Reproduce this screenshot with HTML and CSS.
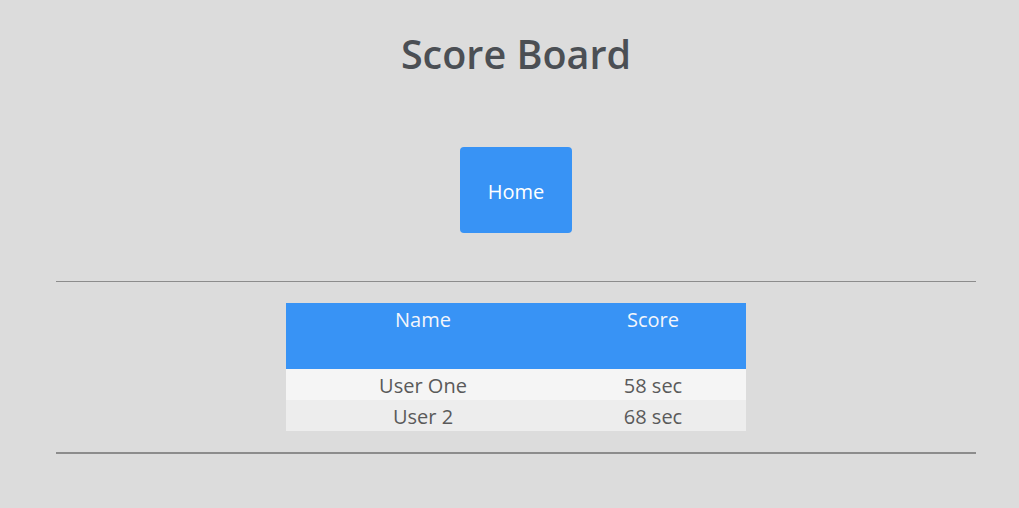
FILE: index.html
```html
<!DOCTYPE html>
<html lang="en">
<head>
<meta charset="utf-8">
<title>Score Board</title>
<link rel="stylesheet" href="styles.css">
</head>
<body>
<div class="container">
  <h1 class="title">Score Board</h1>
  <button class="home-btn">Home</button>
  <hr class="rule">
  <table class="scores">
    <thead>
      <tr><th class="col-name">Name</th><th class="col-score">Score</th></tr>
    </thead>
    <tbody>
      <tr class="row-odd"><td>User One</td><td>58 sec</td></tr>
      <tr class="row-even"><td>User 2</td><td>68 sec</td></tr>
    </tbody>
  </table>
  <hr class="rule rule-thick">
</div>
</body>
</html>
```
FILE: styles.css
```css
html, body {
  margin: 0;
  padding: 0;
  background: #dcdcdc;
  font-family: "Open Sans", "Noto Sans", sans-serif;
}
.container {
  margin-left: 56px;
  width: 920px;
  padding-top: 30px;
}
.title {
  margin: 0;
  text-align: center;
  font-size: 39.5px;
  line-height: 48px;
  font-weight: 600;
  color: #4b4f54;
}
.home-btn {
  display: flex;
  align-items: center;
  justify-content: center;
  margin: 69px auto 0;
  width: 112px;
  height: 86px;
  border: 0;
  border-radius: 4px;
  background: #3893f5;
  color: #ffffff;
  font-family: inherit;
  font-size: 20px;
  padding: 2px 0 0;
}
.rule {
  border: 0;
  border-top: 1px solid #8c8c8c;
  margin: 48px 0 0;
  height: 0;
}
.scores {
  margin: 21px auto 0;
  width: 460px;
  border-collapse: collapse;
  font-size: 20px;
}
.scores th {
  background: #3893f5;
  color: #f3f6fb;
  font-weight: 500;
  line-height: 28px;
  padding: 3px 0 35px;
  vertical-align: top;
  text-align: center;
}
.col-name { width: 274px; }
.col-score { width: 186px; }
.scores td {
  text-align: center;
  line-height: 29px;
  padding: 2px 0 0;
  color: #5a5a5a;
}
.row-odd { background: #f5f5f5; }
.row-even { background: #ededed; }
.rule-thick {
  border-top: 2px solid #8c8c8c;
  margin-top: 21px;
}
```
